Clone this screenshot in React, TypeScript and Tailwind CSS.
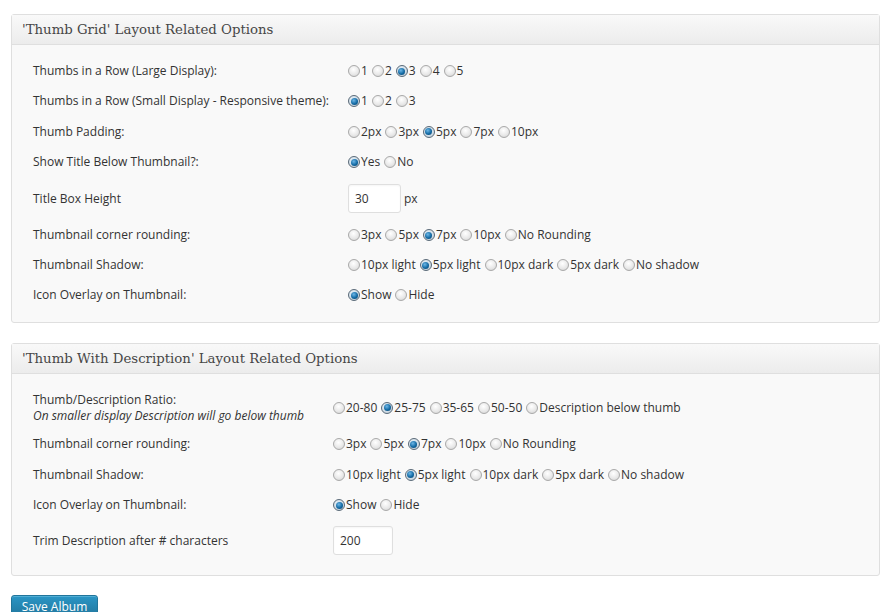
import React from "react";

type Opt = { label: string; checked?: boolean };

function Radio({ checked }: { checked?: boolean }) {
  if (checked) {
    return (
      <span className="inline-flex h-[12px] w-[12px] shrink-0 items-center justify-center rounded-full border border-[#5a6a78] bg-[radial-gradient(circle_at_40%_35%,#eaf3fa_0%,#c9d6e0_70%)]">
        <span className="h-[7px] w-[7px] rounded-full bg-[radial-gradient(circle_at_40%_35%,#6cb6e6_0%,#136aa4_55%,#0b3f66_100%)]" />
      </span>
    );
  }
  return (
    <span className="inline-block h-[12px] w-[12px] shrink-0 rounded-full border border-[#a9a9a9] bg-[radial-gradient(circle_at_45%_35%,#ffffff_0%,#e9e9e9_55%,#cfcfcf_100%)]" />
  );
}

function RadioGroup({ opts }: { opts: Opt[] }) {
  return (
    <div className="flex items-center gap-[4px]">
      {opts.map((o) => (
        <label key={o.label} className="flex items-center gap-[1px]">
          <Radio checked={o.checked} />
          <span>{o.label}</span>
        </label>
      ))}
    </div>
  );
}

function Row({
  label,
  children,
  h,
  col,
}: {
  label: React.ReactNode;
  children: React.ReactNode;
  h: string;
  col: string;
}) {
  return (
    <div className={`flex items-center ${h}`}>
      <div className={`${col} shrink-0`}>{label}</div>
      <div>{children}</div>
    </div>
  );
}

function Panel({ title, children }: { title: string; children: React.ReactNode }) {
  return (
    <div className="w-[869px] rounded-[3px] border border-[#dfdfdf] bg-[#f9f9f9] shadow-[inset_0_1px_0_#fff]">
      <div className="flex h-[30px] items-center border-b border-[#dfdfdf] bg-gradient-to-b from-[#f9f9f9] to-[#ececec] px-[10px] font-['DejaVu_Serif',serif] text-[13.3px] text-[#464646]">
        {title}
      </div>
      {children}
    </div>
  );
}

function TextBox({ value, w }: { value: string; w: string }) {
  return (
    <div className={`flex h-[29px] ${w} items-center rounded-[3px] border border-[#dfdfdf] bg-white px-[6px] shadow-[inset_0_1px_2px_rgba(0,0,0,0.04)]`}>
      {value}
    </div>
  );
}

export default function App() {
  const c1 = "w-[315px]";
  const c2 = "w-[300px]";
  return (
    <div className="min-h-[612px] bg-white pl-[11px] pt-[14px] font-['Open_Sans',sans-serif] text-[12px] text-[#333]">
      <Panel title="'Thumb Grid' Layout Related Options">
        <div className="pl-[21px] pt-[11px] pb-[12px]">
          <Row h="h-[30px]" col={c1} label="Thumbs in a Row (Large Display):">
            <RadioGroup opts={[{ label: "1" }, { label: "2" }, { label: "3", checked: true }, { label: "4" }, { label: "5" }]} />
          </Row>
          <Row h="h-[30px]" col={c1} label="Thumbs in a Row (Small Display - Responsive theme):">
            <RadioGroup opts={[{ label: "1", checked: true }, { label: "2" }, { label: "3" }]} />
          </Row>
          <Row h="h-[31px]" col={c1} label="Thumb Padding:">
            <RadioGroup opts={[{ label: "2px" }, { label: "3px" }, { label: "5px", checked: true }, { label: "7px" }, { label: "10px" }]} />
          </Row>
          <Row h="h-[30px]" col={c1} label="Show Title Below Thumbnail?:">
            <RadioGroup opts={[{ label: "Yes", checked: true }, { label: "No" }]} />
          </Row>
          <Row h="h-[43px]" col={c1} label="Title Box Height">
            <div className="flex items-center gap-[3px]">
              <TextBox value="30" w="w-[53px]" />
              <span>px</span>
            </div>
          </Row>
          <Row h="h-[30px]" col={c1} label="Thumbnail corner rounding:">
            <RadioGroup opts={[{ label: "3px" }, { label: "5px" }, { label: "7px", checked: true }, { label: "10px" }, { label: "No Rounding" }]} />
          </Row>
          <Row h="h-[30px]" col={c1} label="Thumbnail Shadow:">
            <RadioGroup opts={[{ label: "10px light" }, { label: "5px light", checked: true }, { label: "10px dark" }, { label: "5px dark" }, { label: "No shadow" }]} />
          </Row>
          <Row h="h-[30px]" col={c1} label="Icon Overlay on Thumbnail:">
            <RadioGroup opts={[{ label: "Show", checked: true }, { label: "Hide" }]} />
          </Row>
        </div>
      </Panel>

      <div className="h-[20px]" />

      <Panel title="'Thumb With Description' Layout Related Options">
        <div className="pl-[21px] pt-[12px] pb-[14px]">
          <Row
            h="h-[43px]"
            col={c2}
            label={
              <div className="leading-[16px]">
                <div>Thumb/Description Ratio:</div>
                <div className="italic">On smaller display Description will go below thumb</div>
              </div>
            }
          >
            <RadioGroup opts={[{ label: "20-80" }, { label: "25-75", checked: true }, { label: "35-65" }, { label: "50-50" }, { label: "Description below thumb" }]} />
          </Row>
          <Row h="h-[30px]" col={c2} label="Thumbnail corner rounding:">
            <RadioGroup opts={[{ label: "3px" }, { label: "5px" }, { label: "7px", checked: true }, { label: "10px" }, { label: "No Rounding" }]} />
          </Row>
          <Row h="h-[31px]" col={c2} label="Thumbnail Shadow:">
            <RadioGroup opts={[{ label: "10px light" }, { label: "5px light", checked: true }, { label: "10px dark" }, { label: "5px dark" }, { label: "No shadow" }]} />
          </Row>
          <Row h="h-[30px]" col={c2} label="Icon Overlay on Thumbnail:">
            <RadioGroup opts={[{ label: "Show", checked: true }, { label: "Hide" }]} />
          </Row>
          <Row h="h-[41px]" col={c2} label="Trim Description after # characters">
            <TextBox value="200" w="w-[60px]" />
          </Row>
        </div>
      </Panel>

      <div className="pt-[19px]">
        <button className="flex h-[24px] w-[87px] items-center justify-center rounded-[3px] border border-[#21759b] bg-gradient-to-b from-[#2a95c5] to-[#21759b] text-[12px] text-white shadow-[inset_0_1px_0_rgba(120,200,230,0.5)]">
          Save Album
        </button>
      </div>
    </div>
  );
}
